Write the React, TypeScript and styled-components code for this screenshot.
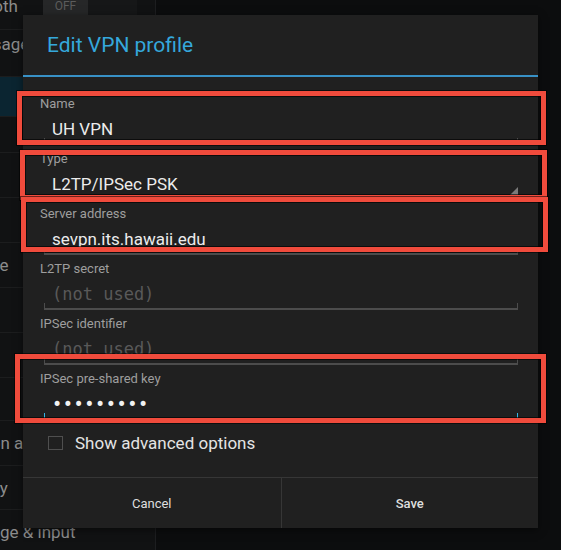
import styled, { createGlobalStyle } from "styled-components";

const GlobalStyle = createGlobalStyle`
  html, body {
    margin: 0;
    padding: 0;
    background: #0c0d0e;
  }
  body {
    font-family: Roboto, "Noto Sans", "Liberation Sans", sans-serif;
  }
  * {
    box-sizing: border-box;
  }
`;

const Screen = styled.div`
  position: relative;
  width: 561px;
  height: 550px;
  overflow: hidden;
  display: flex;
  background: #0c0d0e;
`;

/* settings list behind the dialog */
const SettingsPane = styled.div`
  width: 156px;
  flex-shrink: 0;
  margin-top: -17px;
  display: flex;
  flex-direction: column;
  background: #111213;
  border-right: 1px solid #1d1e20;
`;

const SettingRow = styled.div<{ $h: number; $selected?: boolean; $nudge?: number }>`
  height: ${(p) => p.$h}px;
  flex-shrink: 0;
  display: flex;
  align-items: center;
  padding-right: 18px;
  padding-bottom: ${(p) => p.$nudge ?? 0}px;
  border-bottom: 1px solid #1c1d1e;
  background: ${(p) => (p.$selected ? "#0b2531" : "transparent")};
`;

const SettingLabel = styled.span<{ $indent: number }>`
  margin-left: ${(p) => p.$indent}px;
  font-size: 17px;
  color: #8c8c8c;
  white-space: nowrap;
`;

const HeaderLabel = styled.span`
  margin-left: -90px;
  font-size: 12px;
  font-weight: 700;
  color: #6a6a6a;
`;

const SwitchTrack = styled.div`
  margin-left: auto;
  width: 94px;
  height: 28px;
  display: flex;
  background: #161718;
`;

const SwitchThumb = styled.div`
  width: 45px;
  display: flex;
  align-items: center;
  justify-content: center;
  background: #262728;
  font-size: 12px;
  color: #5c5c5c;
`;

/* dialog */
const Dialog = styled.div`
  position: absolute;
  left: 23px;
  top: 15px;
  width: 515px;
  height: 513px;
  display: flex;
  flex-direction: column;
  background: #202020;
  box-shadow: 0 2px 8px rgba(0, 0, 0, 0.5);
`;

const Title = styled.h1`
  margin: 0;
  height: 62px;
  flex-shrink: 0;
  display: flex;
  align-items: center;
  padding-left: 24px;
  font-size: 21px;
  font-weight: 400;
  color: #35a8dc;
  border-bottom: 2px solid #3891c6;
`;

const Body = styled.div`
  padding-top: 17px;
  display: flex;
  flex-direction: column;
`;

const Field = styled.div`
  position: relative;
  height: 55px;
  margin: 0 20px 0 17px;
  display: flex;
  flex-direction: column;
`;

const FieldLabel = styled.div`
  height: 18px;
  line-height: 19px;
  font-size: 13px;
  color: #9e9e9e;
`;

const InputBox = styled.div<{ $kind?: "text" | "spinner" | "focused" }>`
  position: relative;
  height: 37px;
  margin-left: 4px;
  padding-left: 8px;
  line-height: 35px;
  font-size: 17px;
  color: #ececec;
  white-space: nowrap;

  &::after {
    content: "";
    position: absolute;
    ${(p) =>
      p.$kind === "spinner"
        ? `
      right: 0;
      bottom: 8px;
      width: 0;
      height: 0;
      border-style: solid;
      border-width: 0 0 9px 9px;
      border-color: transparent transparent #7a7a7a transparent;
    `
        : `
      left: 0;
      right: 0;
      bottom: 4px;
      height: 5px;
      border: 1px solid ${p.$kind === "focused" ? "#33b5e5" : "#4c4c4c"};
      border-top: none;
      border-bottom-width: 2px;
    `}
  }
`;

const Placeholder = styled.span`
  font-family: "DejaVu Sans Mono", "Liberation Mono", monospace;
  font-size: 17px;
  color: #595959;
`;

const Secret = styled.span`
  font-family: "DejaVu Sans Mono", "Liberation Mono", monospace;
  font-size: 17px;
  letter-spacing: 0.5px;
  color: #f2f2f2;
`;

/* red annotation drawn over a field */
const Mark = styled.div<{ $t: number; $l: number; $r: number; $b: number }>`
  position: absolute;
  top: ${(p) => p.$t}px;
  left: ${(p) => p.$l}px;
  right: ${(p) => p.$r}px;
  bottom: ${(p) => p.$b}px;
  border: 5px solid #f04b3c;
  box-shadow: 0 0 0 1px rgba(0, 0, 0, 0.55), inset 0 0 0 1px rgba(0, 0, 0, 0.6);
  pointer-events: none;
  z-index: 2;
`;

const CheckRow = styled.label`
  height: 38px;
  margin: 0 0 15px 25px;
  display: flex;
  align-items: center;
  gap: 12px;
  font-size: 17px;
  color: #e4e4e4;
`;

const CheckBox = styled.span`
  width: 15px;
  height: 14px;
  border: 1px solid #4f4f4f;
`;

const ButtonBar = styled.div`
  margin-top: auto;
  height: 51px;
  display: grid;
  grid-template-columns: 1fr 1fr;
  border-top: 1px solid #363636;
`;

const DialogButton = styled.button<{ $divider?: boolean }>`
  border: none;
  border-left: ${(p) => (p.$divider ? "1px solid #363636" : "none")};
  background: transparent;
  font-family: inherit;
  font-size: 13px;
  font-weight: ${(p) => (p.$divider ? 500 : 400)};
  color: #dedede;
  cursor: pointer;
`;

export default function App() {
  return (
    <>
      <GlobalStyle />
      <Screen>
        <SettingsPane>
          <SettingRow $h={47}>
            <SettingLabel $indent={-55}>Bluetooth</SettingLabel>
            <SwitchTrack>
              <SwitchThumb>OFF</SwitchThumb>
            </SwitchTrack>
          </SettingRow>
          <SettingRow $h={47} $nudge={18}>
            <SettingLabel $indent={-56}>Data usage</SettingLabel>
          </SettingRow>
          <SettingRow $h={40} $selected>
            <SettingLabel $indent={-60}>More…</SettingLabel>
          </SettingRow>
          <SettingRow $h={36}>
            <HeaderLabel>DEVICE</HeaderLabel>
          </SettingRow>
          <SettingRow $h={45}>
            <SettingLabel $indent={-56}>Sound</SettingLabel>
          </SettingRow>
          <SettingRow $h={45}>
            <SettingLabel $indent={-58}>Display</SettingLabel>
          </SettingRow>
          <SettingRow $h={45}>
            <SettingLabel $indent={-50}>Storage</SettingLabel>
          </SettingRow>
          <SettingRow $h={45}>
            <SettingLabel $indent={-58}>Battery</SettingLabel>
          </SettingRow>
          <SettingRow $h={45}>
            <SettingLabel $indent={-56}>Apps</SettingLabel>
          </SettingRow>
          <SettingRow $h={43}>
            <HeaderLabel>PERSONAL</HeaderLabel>
          </SettingRow>
          <SettingRow $h={45}>
            <SettingLabel $indent={-56}>Location access</SettingLabel>
          </SettingRow>
          <SettingRow $h={44}>
            <SettingLabel $indent={-53}>Security</SettingLabel>
          </SettingRow>
          <SettingRow $h={45}>
            <SettingLabel $indent={-56}>Language &amp; input</SettingLabel>
          </SettingRow>
        </SettingsPane>

        <Dialog>
          <Title>Edit VPN profile</Title>
          <Body>
            <Field>
              <FieldLabel>Name</FieldLabel>
              <InputBox>UH VPN</InputBox>
              <Mark $t={-3} $l={-23} $r={-28} $b={4} />
            </Field>
            <Field>
              <FieldLabel>Type</FieldLabel>
              <InputBox $kind="spinner">L2TP/IPSec PSK</InputBox>
              <Mark $t={1} $l={-20} $r={-29} $b={4} />
            </Field>
            <Field>
              <FieldLabel>Server address</FieldLabel>
              <InputBox>sevpn.its.hawaii.edu</InputBox>
              <Mark $t={-7} $l={-19} $r={-30} $b={7} />
            </Field>
            <Field>
              <FieldLabel>L2TP secret</FieldLabel>
              <InputBox>
                <Placeholder>(not used)</Placeholder>
              </InputBox>
            </Field>
            <Field>
              <FieldLabel>IPSec identifier</FieldLabel>
              <InputBox>
                <Placeholder>(not used)</Placeholder>
              </InputBox>
            </Field>
            <Field>
              <FieldLabel>IPSec pre-shared key</FieldLabel>
              <InputBox $kind="focused">
                <Secret>•••••••••</Secret>
              </InputBox>
              <Mark $t={-15} $l={-25} $r={-28} $b={1} />
            </Field>
            <CheckRow>
              <CheckBox />
              Show advanced options
            </CheckRow>
          </Body>
          <ButtonBar>
            <DialogButton>Cancel</DialogButton>
            <DialogButton $divider>Save</DialogButton>
          </ButtonBar>
        </Dialog>
      </Screen>
    </>
  );
}
